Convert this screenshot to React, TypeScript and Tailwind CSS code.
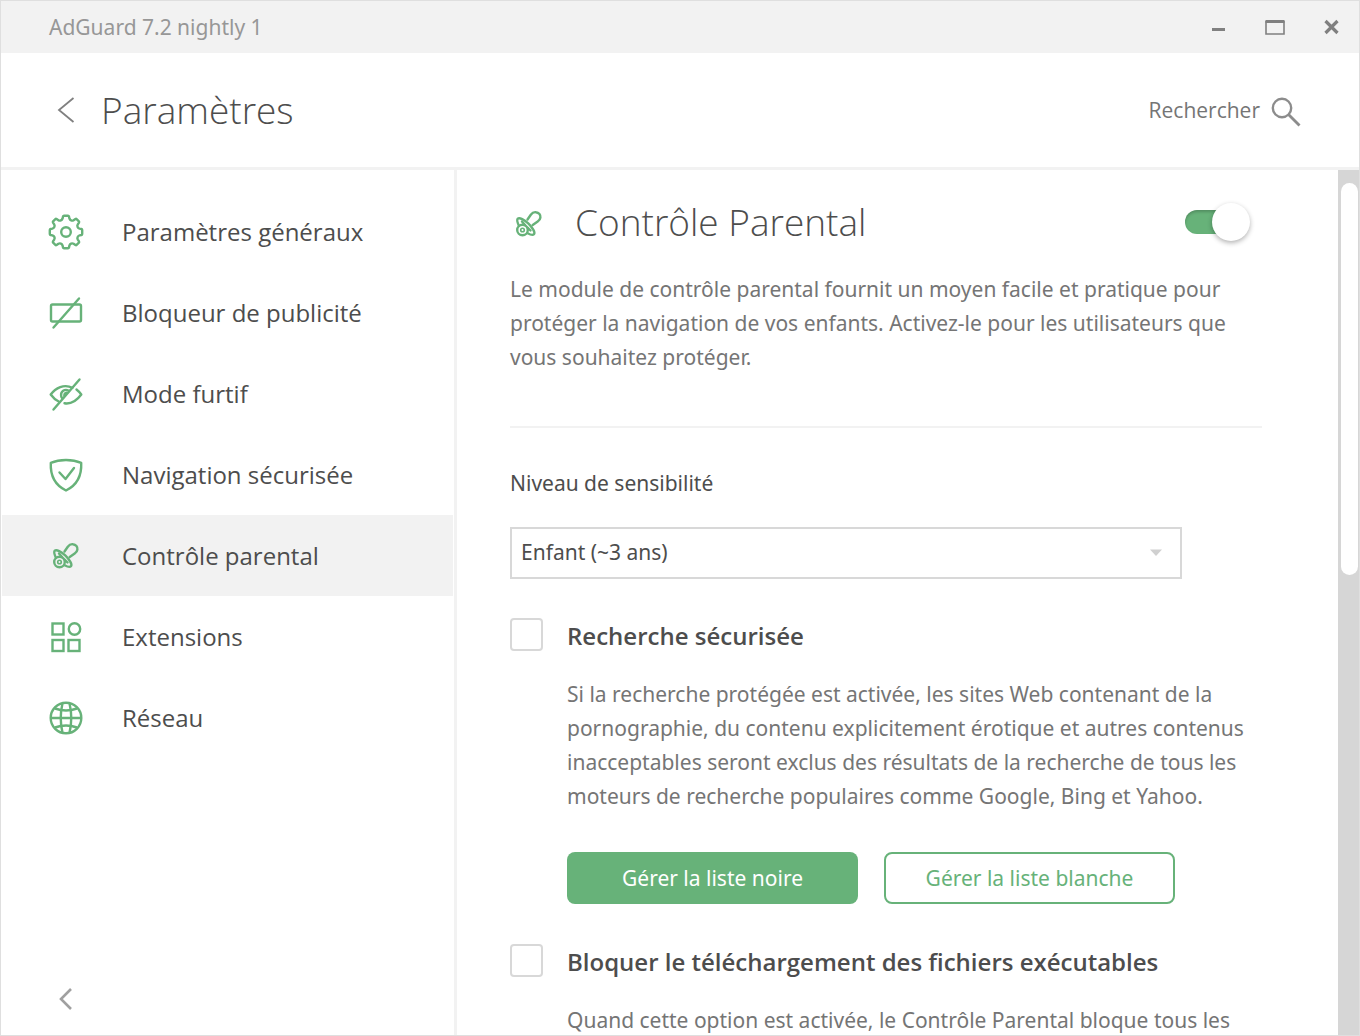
import React, { useState } from 'react';

const GearIcon: React.FC = () => (
    <svg width="36" height="36" viewBox="0 0 36 36" fill="none" stroke="currentColor" strokeWidth="2.4" strokeLinejoin="round">
        <path d="M16 1.800h4q.8 0 1 .8l.4 1.800q.4 1.500 1.700 2t2.500-.2l1.800-1.200q.7-.4 1.200.1l2.300 2.300q.5.500.1 1.200l-1.200 1.800q-.8 1.200-.2 2.500t2 1.700l1.800.4q.8.200.8 1v4q0 .8-.8 1l-1.800.4q-1.500.4-2 1.700t.2 2.500l1.200 1.800q.4.700-.1 1.200l-2.300 2.300q-.5.500-1.200.1l-1.800-1.200q-1.200-.8-2.500-.2t-1.700 2l-.4 1.800q-.2.800-1 .8h-4q-.8 0-1-.8l-.4-1.800q-.4-1.500-1.700-2t-2.500.2l-1.800 1.200q-.7.400-1.200-.1l-2.300-2.300q-.5-.5-.1-1.200l1.200-1.800q.8-1.200.2-2.500t-2-1.700l-1.800-.4q-.8-.2-.8-1v-4q0-.8.8-1l1.800-.4q1.500-.4 2-1.700t-.2-2.500l-1.200-1.800q-.4-.7.1-1.200l2.300-2.300q.5-.5 1.200-.1l1.800 1.200q1.200.8 2.500.2t1.700-2l.4-1.800q.2-.8 1-.8z" />
        <circle cx="18" cy="18" r="4.800" />
    </svg>
);

const BannerIcon: React.FC = () => (
    <svg width="36" height="36" viewBox="0 0 36 36" fill="none" stroke="currentColor" strokeWidth="2.4" strokeLinecap="round">
        <rect x="3" y="9.500" width="30" height="17" rx="1.500" />
        <path d="M31 3.500 5.500 32.500" />
    </svg>
);

const EyeIcon: React.FC = () => (
    <svg width="36" height="36" viewBox="0 0 36 36" fill="none" stroke="currentColor" strokeWidth="2.4" strokeLinecap="round" strokeLinejoin="round">
        <path d="M31.500 3.500 5.500 33.500" />
        <path d="M24.500 11.800C16 7.500 7.500 12 2.700 18.500c2.300 3.200 5 5.500 8 7" />
        <path d="M28.500 13.500c1.700 1.300 3.300 3 4.800 5C28.500 25 22.500 28.200 16.500 27.300" />
        <path d="M20.500 14.500c-4-1.800-7.800 1-7.400 5q.2 1.500 1 2.700" />
        <path d="M18.500 16.800q-2 .3-2.200 2.700" />
    </svg>
);

const ShieldIcon: React.FC = () => (
    <svg width="36" height="36" viewBox="0 0 36 36" fill="none" stroke="currentColor" strokeWidth="2.4" strokeLinecap="round" strokeLinejoin="round">
        <path d="M18 3c5.500 0 10.500.8 15.200 2.800C33.800 18.500 29.500 28 18 33.500 6.500 28 2.200 18.500 2.800 5.800 7.500 3.800 12.500 3 18 3z" />
        <path d="m11.500 15.500 6 6.500 8.500-11" />
    </svg>
);

const PacifierIcon: React.FC = () => (
    <svg width="36" height="36" viewBox="0 0 36 36" fill="none" stroke="currentColor" strokeWidth="2.400" strokeLinecap="round" strokeLinejoin="round">
        <path d="m16.500 13.500 3.300-4.800c1.500-2 3.300-2.700 5-2.500 3.200.2 5 2.700 4.600 5.300-.2 1.700-1.200 3-2.700 4l-5 3.500" />
        <path d="M8 20c-1.200-2.500-2.500-6-1.200-7.300 1.700-1.500 6.500.9 10.700 5s7 9 5.500 10.500c-1.200 1.200-4 .3-6.300-1" />
        <path d="m11 15.500 3.200 3.700m2.300 2.300 3 3" />
        <circle cx="11.500" cy="24" r="5.300" />
        <circle cx="11.500" cy="24" r="1.800" strokeWidth="1.600" />
    </svg>
);

const ExtensionsIcon: React.FC = () => (
    <svg width="36" height="36" viewBox="0 0 36 36" fill="none" stroke="currentColor" strokeWidth="2.4">
        <rect x="4.500" y="4.500" width="11" height="11" />
        <rect x="4.500" y="21" width="11" height="11" />
        <rect x="20.500" y="21" width="11" height="11" />
        <circle cx="26.500" cy="10" r="5.700" />
    </svg>
);

const GlobeIcon: React.FC = () => (
    <svg width="36" height="36" viewBox="0 0 36 36" fill="none" stroke="currentColor" strokeWidth="2.4">
        <circle cx="18" cy="18" r="15.300" />
        <path d="M2.700 18h30.600M7 8.500q11 4 22 0M7 27.500q11-4 22 0" />
        <path d="M14.500 3.200q-3.500 14.800 0 29.600M21.500 3.200q3.500 14.800 0 29.600" />
    </svg>
);

const menuItems = [
    { label: 'Paramètres généraux', Icon: GearIcon },
    { label: 'Bloqueur de publicité', Icon: BannerIcon },
    { label: 'Mode furtif', Icon: EyeIcon },
    { label: 'Navigation sécurisée', Icon: ShieldIcon },
    { label: 'Contrôle parental', Icon: PacifierIcon },
    { label: 'Extensions', Icon: ExtensionsIcon },
    { label: 'Réseau', Icon: GlobeIcon },
];

const checkboxClass =
    'mt-1 h-[33px] w-[33px] shrink-0 appearance-none rounded-sm border-2 border-[#d8d8d8] bg-white checked:bg-[#67b279]';

const App: React.FC = () => {
    const [active, setActive] = useState('Contrôle parental');
    const [enabled, setEnabled] = useState(true);
    const [level, setLevel] = useState('3');

    return (
        <div className="flex h-screen flex-col overflow-hidden border border-[#dfdfdf] bg-white font-['Noto_Sans',sans-serif] text-[21px] text-[#4d4d4d]">
            <div className="flex h-13 shrink-0 items-center justify-between bg-[#f2f2f2] pr-5 pl-12">
                <span className="pt-0.5 text-[#979797]">AdGuard 7.2 nightly 1</span>
                <div className="flex items-center gap-9 text-[#808080]">
                    <button aria-label="Réduire">
                        <svg width="20" height="20" viewBox="0 0 20 20" fill="none" stroke="currentColor">
                            <path d="M3 12.500h13" strokeWidth="3" />
                        </svg>
                    </button>
                    <button aria-label="Agrandir">
                        <svg width="22" height="20" viewBox="0 0 22 20" fill="none" stroke="currentColor">
                            <path d="M1 4v13h18V4" strokeWidth="1.600" />
                            <path d="M.500 4.500h19" strokeWidth="3" />
                        </svg>
                    </button>
                    <button aria-label="Fermer">
                        <svg width="16" height="20" viewBox="0 0 16 20" fill="none" stroke="currentColor">
                            <path d="m2.500 4 12 12m0-12-12 12" strokeWidth="3.200" />
                        </svg>
                    </button>
                </div>
            </div>

            <header className="flex h-[117px] shrink-0 items-center justify-between border-b-3 border-[#f2f2f2] pr-14 pl-14 font-['Open_Sans',sans-serif]">
                <div className="flex items-center gap-6">
                    <button aria-label="Retour" className="text-[#808080]">
                        <svg width="20" height="28" viewBox="0 0 20 28" fill="none" stroke="currentColor" strokeWidth="1.800">
                            <path d="M16.500 2 2 14l14.500 12" />
                        </svg>
                    </button>
                    <h1 className="text-[37px] font-light">Paramètres</h1>
                </div>
                <button className="flex items-center gap-2 pt-0.5 text-[#757575]">
                    Rechercher
                    <svg width="35" height="34" viewBox="0 0 35 34" fill="none" stroke="#8c8c8c" strokeWidth="2.400">
                        <circle cx="14" cy="14" r="9.200" />
                        <path d="m20.500 20.500 11 11" strokeWidth="2.800" />
                    </svg>
                </button>
            </header>

            <div className="flex min-h-0 flex-1">
                <aside className="flex w-[456px] shrink-0 flex-col justify-between border-r-3 border-[#f2f2f2] px-px pt-[21px]">
                    <nav className="font-['Open_Sans',sans-serif]">
                        {menuItems.map(({ label, Icon }) => (
                            <button
                                key={label}
                                onClick={() => setActive(label)}
                                className={
                                    active === label
                                        ? 'flex h-[81px] w-full items-center gap-[38px] bg-[#f2f2f2] pl-[46px] text-2xl'
                                        : 'flex h-[81px] w-full items-center gap-[38px] pl-[46px] text-2xl'
                                }
                            >
                                <span className="text-[#67b279]"><Icon /></span>
                                {label}
                            </button>
                        ))}
                    </nav>
                    <button aria-label="Replier le menu" className="mb-6 ml-13 self-start text-[#a0a0a0]">
                        <svg width="20" height="24" viewBox="0 0 20 24" fill="none" stroke="currentColor" strokeWidth="2.600">
                            <path d="M17 2 7 12l10 10" />
                        </svg>
                    </button>
                </aside>

                <main className="min-w-0 flex-1 overflow-hidden pt-6 pr-19 pl-[53px]">
                    <div className="flex h-14 items-center">
                        <span className="pt-1 pl-px text-[#67b279]"><PacifierIcon /></span>
                        <h2 className="ml-7 flex-1 font-['Open_Sans',sans-serif] text-[37px] font-light">Contrôle Parental</h2>
                        <input
                            type="checkbox"
                            role="switch"
                            aria-label="Contrôle Parental"
                            checked={enabled}
                            onChange={() => setEnabled(!enabled)}
                            className="relative mr-3 h-10 w-[65px] appearance-none before:absolute before:top-2 before:left-0 before:h-6 before:w-14 before:rounded-full before:bg-[#c4c4c4] before:shadow-[inset_0_2px_3px_rgba(0,0,0,0.2)] after:absolute after:top-px after:left-0 after:h-[38px] after:w-[38px] after:rounded-full after:bg-white after:shadow-[0_2px_5px_rgba(0,0,0,0.3)] checked:before:bg-[#67b279] checked:after:left-[27px]"
                        />
                    </div>
                    <p className="mt-[22px] leading-[34px] text-[#757575]">
                        Le module de contrôle parental fournit un moyen facile et pratique pour
                        <br />
                        protéger la navigation de vos enfants. Activez-le pour les utilisateurs que
                        <br />
                        vous souhaitez protéger.
                    </p>
                    <hr className="mt-13 border-t-2 border-[#f2f2f2]" />

                    <label htmlFor="level" className="mt-[38px] block leading-[34px]">Niveau de sensibilité</label>
                    <div className="relative mt-[27px] mr-20">
                        <select
                            id="level"
                            value={level}
                            onChange={(e) => setLevel(e.target.value)}
                            className="h-13 w-full appearance-none border-2 border-[#d8d8d8] bg-white pl-[9px]"
                        >
                            <option value="3">Enfant (~3 ans)</option>
                        </select>
                        <svg className="pointer-events-none absolute top-[22px] right-5" width="12" height="8" viewBox="0 0 12 8" fill="#d0d0d0">
                            <path d="M0 .500h12L6 7z" />
                        </svg>
                    </div>

                    <section className="mt-[35px] flex gap-6">
                        <input type="checkbox" id="safe-search" className={checkboxClass} />
                        <div className="min-w-0 flex-1">
                            <label htmlFor="safe-search" className="block font-['Open_Sans',sans-serif] text-2xl leading-[44px] font-semibold">
                                Recherche sécurisée
                            </label>
                            <p className="mt-[19px] leading-[34px] text-[#757575]">
                                Si la recherche protégée est activée, les sites Web contenant de la
                                <br />
                                pornographie, du contenu explicitement érotique et autres contenus
                                <br />
                                inacceptables seront exclus des résultats de la recherche de tous les
                                <br />
                                moteurs de recherche populaires comme Google, Bing et Yahoo.
                            </p>
                            <div className="mt-[39px] mr-[87px] grid grid-cols-2 gap-[26px]">
                                <button className="h-13 rounded-lg bg-[#67b279] pt-0.5 text-white">Gérer la liste noire</button>
                                <button className="h-13 rounded-lg border-2 border-[#67b279] pt-0.5 text-[#67b279]">Gérer la liste blanche</button>
                            </div>
                        </div>
                    </section>

                    <section className="mt-9 flex gap-6">
                        <input type="checkbox" id="block-exe" className={checkboxClass} />
                        <div className="min-w-0 flex-1">
                            <label htmlFor="block-exe" className="block font-['Open_Sans',sans-serif] text-2xl leading-[44px] font-semibold">
                                Bloquer le téléchargement des fichiers exécutables
                            </label>
                            <p className="mt-[19px] leading-[34px] text-[#757575]">
                                Quand cette option est activée, le Contrôle Parental bloque tous les
                            </p>
                        </div>
                    </section>
                </main>

                <div className="w-[21px] shrink-0 bg-[#d6d6d6] pt-[13px] pr-px pl-[3px]">
                    <div className="h-[46%] rounded-full bg-white" />
                </div>
            </div>
        </div>
    );
};

export default App;
